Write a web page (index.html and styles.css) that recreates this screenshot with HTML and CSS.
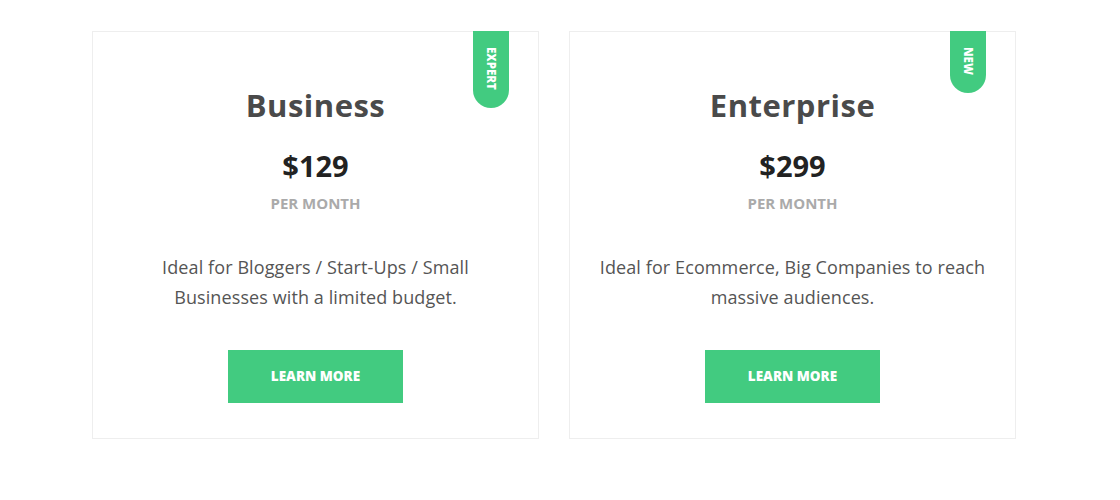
FILE: index.html
```html
<!DOCTYPE HTML>
<html>
	<head>
		<meta charset="utf-8">
		<link rel="stylesheet" href="styles.css">
	</head>
	<body>
		<section class="pricing">
			<div class="plan">
				<span class="ribbon">Expert</span>
				<h2>Business</h2>
				<p class="price">$129</p>
				<p class="period">Per month</p>
				<p class="desc">Ideal for Bloggers / Start-Ups / Small Businesses with a limited budget.</p>
				<a class="btn" href="#">Learn more</a>
			</div>
			<div class="plan">
				<span class="ribbon">New</span>
				<h2>Enterprise</h2>
				<p class="price">$299</p>
				<p class="period">Per month</p>
				<p class="desc">Ideal for Ecommerce, Big Companies to reach massive audiences.</p>
				<a class="btn" href="#">Learn more</a>
			</div>
		</section>
	</body>
</html>
```

FILE: styles.css
```css
* { margin: 0; padding: 0; box-sizing: border-box; }
body {
	background: #fff;
	color: #555;
	font-family: 'Open Sans', 'Liberation Sans', sans-serif;
	margin: 0;
}
.pricing {
	display: flex;
	gap: 30px;
	padding: 31px 0 0 92px;
}
.plan {
	position: relative;
	width: 447px;
	height: 408px;
	border: 1px solid #eee;
	text-align: center;
	padding: 53px 26px 0;
}
.ribbon {
	position: absolute;
	top: -1px;
	right: 29px;
	width: 36px;
	background: #42cb80;
	color: #fff;
	border-radius: 0 0 18px 18px;
	font-family: 'Open Sans', sans-serif;
	font-weight: 800;
	font-size: 11.5px;
	text-transform: uppercase;
	writing-mode: vertical-rl;
	line-height: 36px;
	padding: 16px 0 18px;
}
h2 {
	color: #4a4a4a;
	font-size: 31px;
	font-weight: 700;
	letter-spacing: 0.5px;
	line-height: 40px;
}
.price {
	color: #222;
	font-size: 29px;
	font-weight: 700;
	line-height: 40px;
	margin-top: 21px;
}
.period {
	color: #aaa;
	font-size: 15px;
	font-weight: 700;
	text-transform: uppercase;
	line-height: 20px;
	margin-top: 7px;
}
.desc {
	font-size: 18px;
	letter-spacing: 0.1px;
	line-height: 30px;
	color: #555;
	margin-top: 39px;
}
.btn {
	display: inline-block;
	width: 175px;
	height: 53px;
	line-height: 53px;
	background: #42cb80;
	color: #fff;
	font-size: 13.5px;
	font-weight: 800;
	text-transform: uppercase;
	text-decoration: none;
	margin-top: 38px;
}
```
